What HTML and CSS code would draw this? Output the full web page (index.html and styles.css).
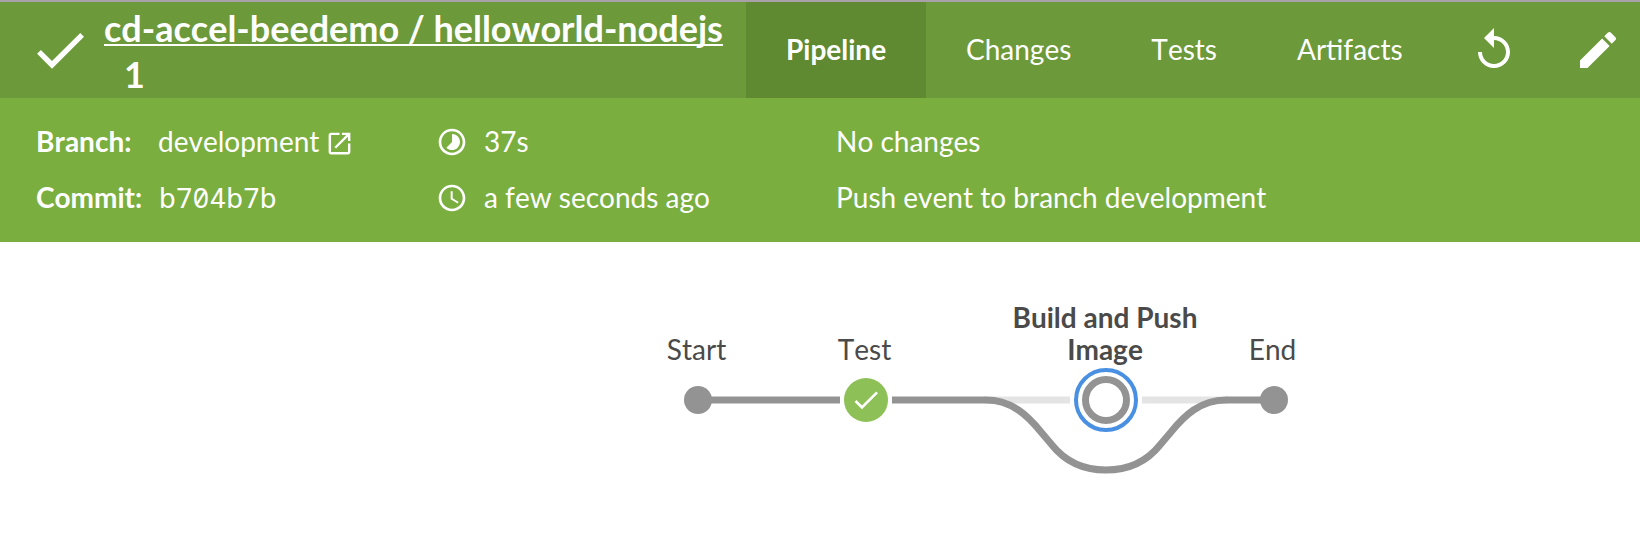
FILE: index.html
```html
<!DOCTYPE html>
<html lang="en">
<head>
<meta charset="utf-8">
<title>cd-accel-beedemo / helloworld-nodejs 1</title>
<link rel="stylesheet" href="styles.css">
</head>
<body>
<header class="topbar">
  <svg class="status-icon" viewBox="0 0 24 24"><path d="M9 16.17L4.83 12l-1.42 1.41L9 19 21 7l-1.41-1.41z"/></svg>
  <h1 class="title"><a class="title-link" href="#">cd-accel-beedemo / helloworld-nodejs</a><span class="run-number">1</span></h1>
  <nav class="tabs">
    <a class="tab tab-active">Pipeline</a>
    <a class="tab">Changes</a>
    <a class="tab">Tests</a>
    <a class="tab">Artifacts</a>
  </nav>
  <div class="actions">
    <svg class="action-icon" viewBox="0 0 24 24"><path d="M12 5V1L7 6l5 5V7c3.31 0 6 2.69 6 6s-2.69 6-6 6-6-2.69-6-6H4c0 4.42 3.58 8 8 8s8-3.58 8-8-3.58-8-8-8z"/></svg>
    <svg class="action-icon" viewBox="0 0 24 24"><path d="M3 17.25V21h3.75L17.81 9.94l-3.75-3.75L3 17.25zM20.71 7.04c.39-.39.39-1.02 0-1.41l-2.34-2.34c-.39-.39-1.02-.39-1.41 0l-1.83 1.83 3.75 3.75 1.83-1.83z"/></svg>
  </div>
</header>
<section class="details">
  <div class="cell branch"><span class="label">Branch:</span><span class="value">development</span><svg class="launch-icon" viewBox="0 0 24 24"><path d="M19 19H5V5h7V3H5c-1.11 0-2 .9-2 2v14c0 1.1.89 2 2 2h14c1.1 0 2-.9 2-2v-7h-2v7zM14 3v2h3.59l-9.83 9.83 1.41 1.41L19 6.41V10h2V3h-7z"/></svg></div>
  <div class="cell"><svg class="time-icon" viewBox="0 0 24 24"><path d="M16.24 7.76C15.07 6.59 13.54 6 12 6v6l-4.24 4.24c2.34 2.34 6.14 2.34 8.49 0 2.34-2.34 2.34-6.14-.01-8.48zM12 2C6.48 2 2 6.48 2 12s4.48 10 10 10 10-4.48 10-10S17.52 2 12 2zm0 18c-4.42 0-8-3.58-8-8s3.58-8 8-8 8 3.58 8 8-3.58 8-8 8z"/></svg><span>37s</span></div>
  <div class="cell"><span>No changes</span></div>
  <div class="cell"><span class="label">Commit:</span><span class="hash">b704b7b</span></div>
  <div class="cell"><svg class="time-icon" viewBox="0 0 24 24"><path d="M11.99 2C6.47 2 2 6.48 2 12s4.47 10 9.99 10C17.52 22 22 17.52 22 12S17.52 2 11.99 2zM12 20c-4.42 0-8-3.58-8-8s3.58-8 8-8 8 3.58 8 8-3.58 8-8 8zm.5-13H11v6l5.25 3.15.75-1.23-4.5-2.67z"/></svg><span>a few seconds ago</span></div>
  <div class="cell"><span>Push event to branch development</span></div>
</section>
<main class="pipeline">
  <svg class="graph" width="680" height="200" viewBox="640 290 680 200">
    <g class="edge">
      <path d="M698 400H840M892 400H984"/>
      <path class="edge-skipped" d="M984 400H1070M1142 400H1228"/>
      <path d="M984 400H986C1012 400 1028 416 1041 432L1052 445C1064 460 1082 470 1106 470S1148 460 1160 445L1171 432C1184 416 1200 400 1226 400H1274"/>
    </g>
    <circle class="terminal" cx="698" cy="400" r="14"/>
    <circle class="success" cx="866" cy="400" r="22"/>
    <path class="success-check" transform="translate(850 384) scale(1.3333)" d="M9 16.17L4.83 12l-1.42 1.41L9 19 21 7l-1.41-1.41z"/>
    <circle class="focus-ring" cx="1106" cy="400" r="30"/>
    <circle class="node-ring" cx="1106" cy="400" r="20.5"/>
    <circle class="terminal" cx="1274" cy="400" r="14"/>
    <g class="stage-label">
      <text x="696.5" y="360">Start</text>
      <text x="864.5" y="360">Test</text>
      <text class="selected" x="1105" y="328">Build and Push</text>
      <text class="selected" x="1105" y="360">Image</text>
      <text x="1272.5" y="360">End</text>
    </g>
  </svg>
</main>
</body>
</html>
```
FILE: styles.css
```css
* { box-sizing: border-box; }

body {
  margin: 0;
  height: 538px;
  overflow: hidden;
  background: #fff;
  color: #fff;
  font: 28px/32px Lato, sans-serif;
  font-kerning: none;
}

.topbar {
  display: flex;
  align-items: center;
  height: 98px;
  padding: 0 18px 0 28px;
  border-top: 2px solid #a8a1a8;
  background: #6c9939;
  fill: #fff;
}

.status-icon { flex: none; width: 64px; height: 64px; }

.title {
  flex: none;
  width: 642px;
  margin: 2px 0 0 12px;
  font-size: 36px;
  font-weight: 700;
  line-height: 46px;
  white-space: nowrap;
}

.title-link {
  display: block;
  color: inherit;
  text-decoration-line: underline;
  text-decoration-thickness: 2px;
  text-underline-offset: 2px;
  text-decoration-skip-ink: none;
}

.run-number { display: block; padding-left: 20px; }

.tabs { display: flex; align-self: stretch; }

.tab { display: flex; align-items: center; padding: 0 40px 2px; }

.tab-active { width: 180px; background: #608a31; font-weight: 700; }

.actions { display: flex; gap: 56px; margin-left: auto; }

.action-icon { width: 48px; height: 48px; }

.details {
  display: grid;
  grid-template-columns: 400px 400px 1fr;
  grid-auto-rows: 56px;
  height: 144px;
  padding: 16px 36px;
  background: #7aae3f;
  fill: #fff;
}

.cell { display: flex; align-items: center; white-space: nowrap; }

.cell span { padding-bottom: 2px; }

.label { width: 122px; font-weight: 700; }

.launch-icon { width: 29px; height: 29px; margin: 3px 0 0 6px; }

.time-icon { width: 32px; height: 32px; margin-right: 16px; }

.hash {
  margin-left: 1px;
  font-family: "Noto Sans Mono", "Noto Sans", sans-serif;
  font-feature-settings: "zero";
}

.pipeline { display: flex; padding: 48px 0 0 640px; }

.graph { display: block; }

.edge { fill: none; stroke: #949393; stroke-width: 7; }

.edge-skipped { stroke: #e4e4e4; }

.terminal { fill: #949393; }

.success { fill: #8dc057; }

.success-check { fill: #fff; }

.focus-ring { fill: #fff; stroke: #4a90e2; stroke-width: 4; }

.node-ring { fill: #fff; stroke: #949393; stroke-width: 7; }

.stage-label { fill: #4a4a4a; text-anchor: middle; }

.selected { font-weight: 700; }
```
